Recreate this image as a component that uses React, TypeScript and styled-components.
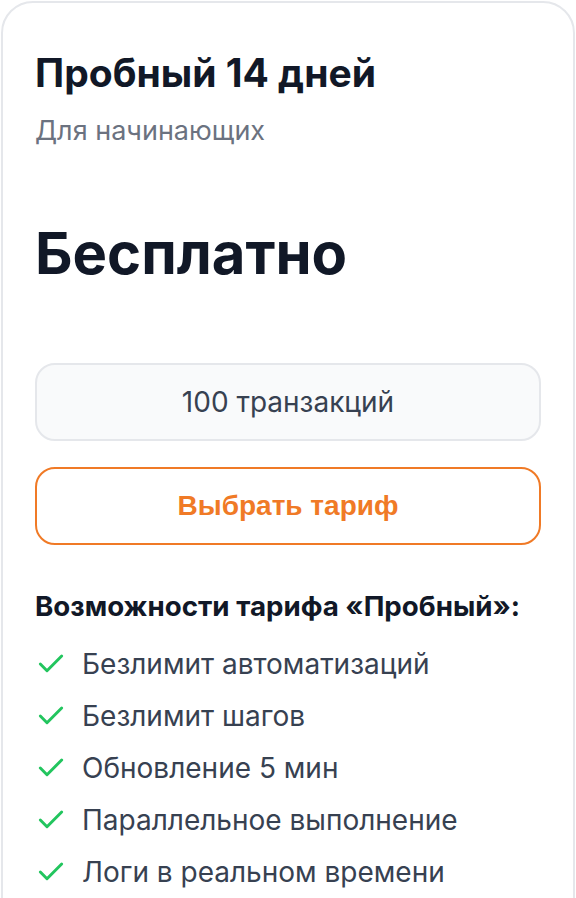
import React from 'react';
import styled, { createGlobalStyle } from 'styled-components';
import { Check } from 'lucide-react';

const features = [
  'Безлимит автоматизаций',
  'Безлимит шагов',
  'Обновление 5 мин',
  'Параллельное выполнение',
  'Логи в реальном времени',
];

const App: React.FC = () => {
  return (
    <>
      <GlobalStyle />
      <Card>
        <Header>
          <PlanName>Пробный 14 дней</PlanName>
          <PlanHint>Для начинающих</PlanHint>
        </Header>
        <Price>Бесплатно</Price>
        <Quota>100 транзакций</Quota>
        <ChooseButton type="button">Выбрать тариф</ChooseButton>
        <FeaturesTitle>Возможности тарифа «Пробный»:</FeaturesTitle>
        <FeatureList>
          {features.map((item) => (
            <FeatureItem key={item}>
              <CheckIcon size={32} strokeWidth={2.2} />
              <span>{item}</span>
            </FeatureItem>
          ))}
        </FeatureList>
      </Card>
    </>
  );
};

const GlobalStyle = createGlobalStyle`
  * {
    box-sizing: border-box;
  }

  body {
    margin: 0;
    background: #ffffff;
    font-family: Inter, 'Noto Sans', sans-serif;
  }
`;

const Card = styled.div`
  margin: 1px 1px 0 1px;
  padding: 46px 32px 40px;
  border: 2px solid #e5e7eb;
  border-radius: 32px;
  background: #ffffff;
  display: flex;
  flex-direction: column;
`;

const Header = styled.div`
  display: flex;
  flex-direction: column;
  gap: 18px;
`;

const PlanName = styled.h2`
  margin: 0;
  font-size: 39px;
  line-height: 48px;
  font-weight: 700;
  color: #111827;
`;

const PlanHint = styled.p`
  margin: 0;
  font-size: 27px;
  line-height: 32px;
  color: #6b7280;
`;

const Price = styled.div`
  margin-top: 77px;
  font-size: 58px;
  line-height: 58px;
  font-weight: 700;
  color: #111827;
`;

const Quota = styled.div`
  margin-top: 81px;
  height: 78px;
  display: flex;
  align-items: center;
  justify-content: center;
  border: 2px solid #e5e7eb;
  border-radius: 20px;
  background: #f9fafb;
  font-size: 28px;
  color: #374151;
`;

const ChooseButton = styled.button`
  margin-top: 26px;
  height: 78px;
  display: flex;
  align-items: center;
  justify-content: center;
  border: 2px solid #f07a26;
  border-radius: 20px;
  background: #ffffff;
  font-family: 'Liberation Sans', Arial, sans-serif;
  font-size: 28px;
  font-weight: 700;
  color: #f07a26;
  cursor: pointer;
`;

const FeaturesTitle = styled.h3`
  margin: 45px 0 0;
  font-size: 27.7px;
  line-height: 32px;
  font-weight: 700;
  color: #111827;
`;

const FeatureList = styled.ul`
  margin: 16px 0 0;
  padding: 0;
  list-style: none;
  display: flex;
  flex-direction: column;
`;

const FeatureItem = styled.li`
  height: 52px;
  display: flex;
  align-items: center;
  gap: 15px;
  font-size: 28px;
  color: #374151;
`;

const CheckIcon = styled(Check)`
  flex-shrink: 0;
  color: #22c55e;
`;

export default App;
